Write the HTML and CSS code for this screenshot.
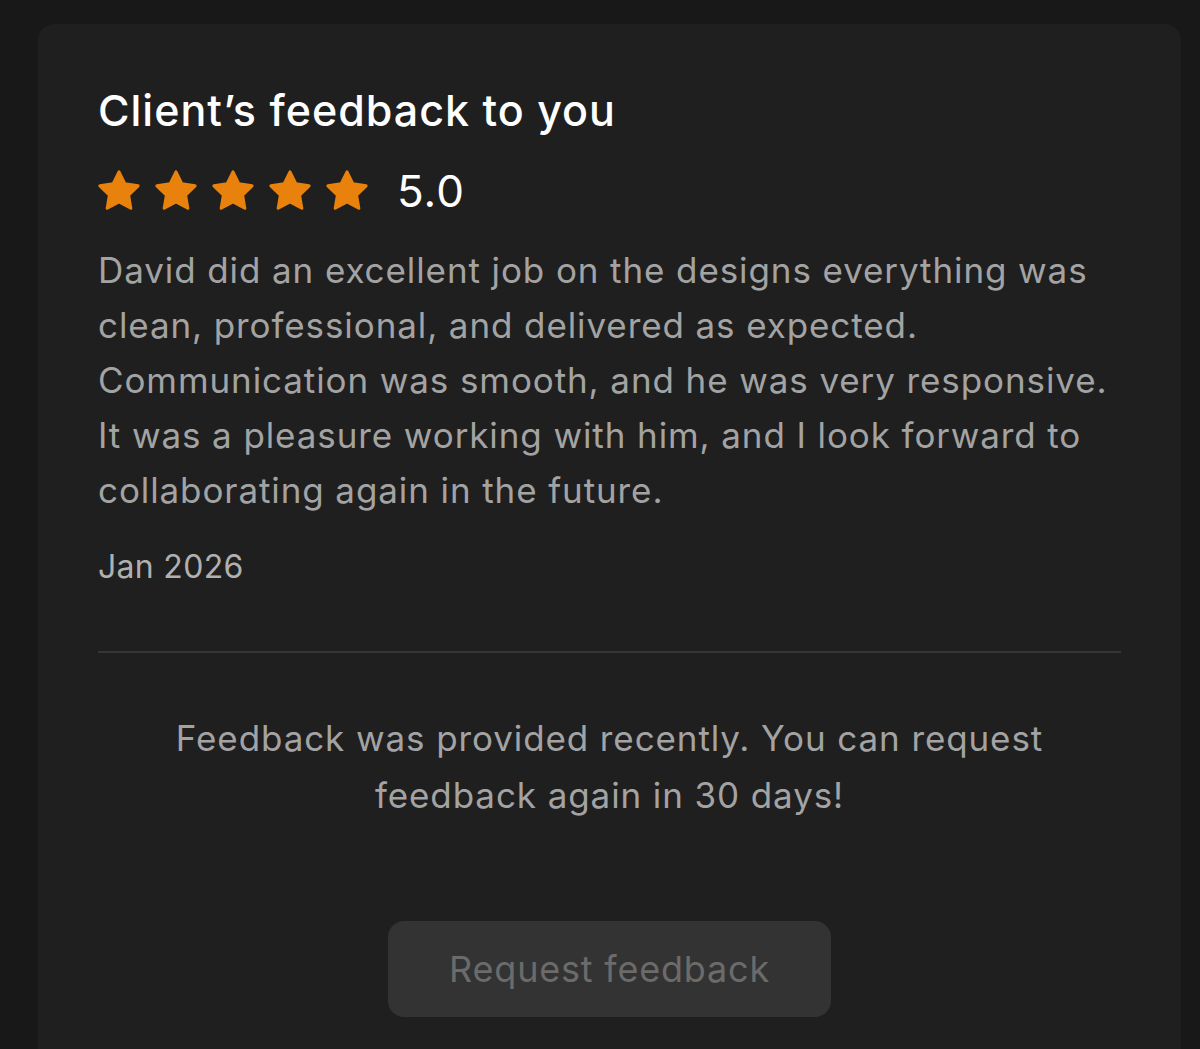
FILE: index.html
```html
<!DOCTYPE html>
<html lang="en">
<head>
<meta charset="utf-8">
<title>Client's feedback</title>
<link rel="stylesheet" href="styles.css">
</head>
<body>
<div class="card">
  <h1 class="title">Client’s feedback to you</h1>
  <div class="rating">
    <div class="stars">
      <svg class="star" viewBox="1 1 22 22"><polygon points="12,2 15.09,8.26 22,9.27 17,14.14 18.18,21.02 12,17.77 5.82,21.02 7,14.14 2,9.27 8.91,8.26"/></svg>
      <svg class="star" viewBox="1 1 22 22"><polygon points="12,2 15.09,8.26 22,9.27 17,14.14 18.18,21.02 12,17.77 5.82,21.02 7,14.14 2,9.27 8.91,8.26"/></svg>
      <svg class="star" viewBox="1 1 22 22"><polygon points="12,2 15.09,8.26 22,9.27 17,14.14 18.18,21.02 12,17.77 5.82,21.02 7,14.14 2,9.27 8.91,8.26"/></svg>
      <svg class="star" viewBox="1 1 22 22"><polygon points="12,2 15.09,8.26 22,9.27 17,14.14 18.18,21.02 12,17.77 5.82,21.02 7,14.14 2,9.27 8.91,8.26"/></svg>
      <svg class="star" viewBox="1 1 22 22"><polygon points="12,2 15.09,8.26 22,9.27 17,14.14 18.18,21.02 12,17.77 5.82,21.02 7,14.14 2,9.27 8.91,8.26"/></svg>
    </div>
    <span class="score">5.0</span>
  </div>
  <p class="review">David did an excellent job on the designs everything was clean, professional, and delivered as expected. Communication was smooth, and he was very responsive. It was a pleasure working with him, and I look forward to collaborating again in the future.</p>
  <div class="date">Jan 2026</div>
  <hr class="divider">
  <p class="notice">Feedback was provided recently. You can request feedback again in 30 days!</p>
  <div class="actions">
    <button class="request-btn" disabled>Request feedback</button>
  </div>
</div>
</body>
</html>
```

FILE: styles.css
```css
html, body {
  margin: 0;
  padding: 0;
  background: #181818;
  height: 100%;
  overflow: hidden;
}

body {
  font-family: Inter, "Liberation Sans", Arial, sans-serif;
  padding: 24px 19px 0 38px;
  box-sizing: border-box;
}

.card {
  background: #1f1f1f;
  border-radius: 16px 16px 0 0;
  padding: 62px 60px 60px 60px;
  min-height: 1100px;
  box-sizing: border-box;
}

.title {
  margin: 0;
  font-size: 43px;
  line-height: 48px;
  font-weight: 500;
  letter-spacing: 1px;
  color: #ffffff;
}

.rating {
  display: flex;
  align-items: center;
  margin-top: 36px;
  height: 42px;
}

.stars {
  display: flex;
  gap: 15px;
}

.star {
  width: 42px;
  height: 42px;
  display: block;
}

.star polygon {
  fill: #e8820c;
  stroke: #e8820c;
  stroke-width: 1.6;
  stroke-linejoin: round;
}

.score {
  margin-left: 29px;
  font-size: 44px;
  line-height: 42px;
  letter-spacing: 1px;
  color: #ffffff;
}

.review {
  margin: 31px 0 0 0;
  font-size: 35px;
  line-height: 55px;
  letter-spacing: 0.9px;
  color: #a3a3a3;
}

.date {
  margin-top: 29px;
  font-size: 32px;
  line-height: 40px;
  letter-spacing: 0.3px;
  color: #b0b0b0;
}

.divider {
  margin: 64px 0 0 0;
  border: 0;
  height: 2px;
  background: #353535;
}

.notice {
  margin: 57px 0 0 0;
  padding: 0 60px;
  text-align: center;
  font-size: 35px;
  line-height: 57px;
  letter-spacing: 0.9px;
  color: #a3a3a3;
}

.actions {
  display: flex;
  justify-content: center;
  margin-top: 97px;
}

.request-btn {
  width: 443px;
  height: 96px;
  border: 0;
  border-radius: 16px;
  background: #333333;
  color: #6b6b6b;
  font-family: Inter, "Liberation Sans", Arial, sans-serif;
  font-size: 36px;
  letter-spacing: 0.8px;
  cursor: default;
}
```
